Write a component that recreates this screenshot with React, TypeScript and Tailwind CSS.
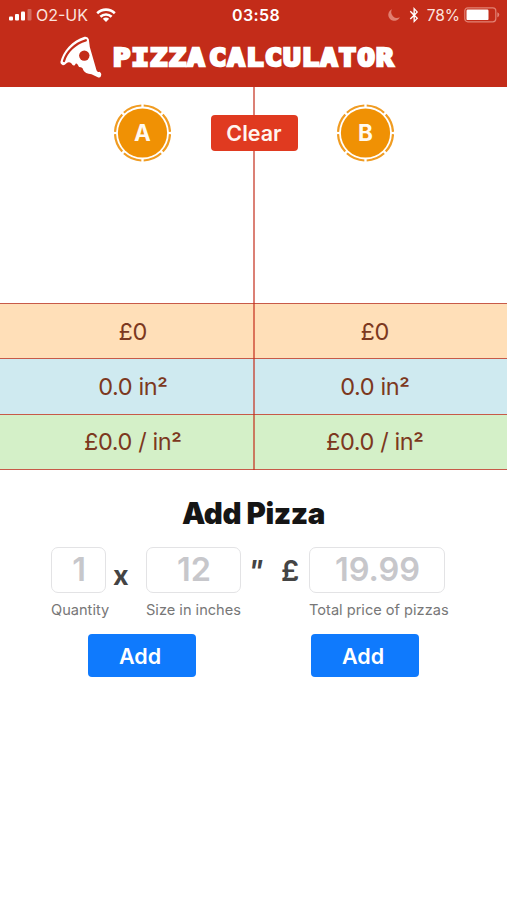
import { FaBluetoothB } from 'react-icons/fa'

const ROWS = [
  { value: '£0', squared: false, bg: 'bg-[#ffdfb8]' },
  { value: '0.0 in', squared: true, bg: 'bg-[#cfeaf0]' },
  { value: '£0.0 / in', squared: true, bg: 'bg-[#d4f0c8]' },
]

function StatusBar() {
  return (
    <div className="flex h-[30px] items-center text-[15.5px] text-[#fbe3de]">
      <div className="flex flex-1 items-center pl-[9px]">
        <svg width="23" height="12" viewBox="0 0 23 12" fill="#fff">
          <rect x="0" y="7.5" width="4" height="4" rx="1" />
          <rect x="6" y="5" width="4" height="6.5" rx="1" />
          <rect x="12" y="2.5" width="4" height="9" rx="1" />
          <rect x="18.5" y="0" width="4" height="11.5" rx="1" opacity=".3" />
        </svg>
        <span className="ml-[4px] text-[16px]">O2-UK</span>
        <svg className="ml-[8px]" width="20" height="15" viewBox="0 0 20 15" fill="none" stroke="#fff" strokeWidth="2.6">
          <path d="M1.2 5.2C6.2.4 13.8.4 18.8 5.2" />
          <path d="M4.4 8.7C7.6 5.7 12.4 5.7 15.6 8.7" />
          <path d="M10 14 6.8 10.8Q10 8.2 13.2 10.8Z" fill="#fff" stroke="none" />
        </svg>
      </div>
      <span className="pl-[3px] text-[16px] font-semibold tracking-[0.4px] text-white">03:58</span>
      <div className="flex flex-1 items-center justify-end pr-[7px]">
        <svg width="12" height="12" viewBox="0 0 12 12" fill="#e17f70">
          <path d="M4 .3A6 6 0 1 0 11.8 8.2 5.8 5.8 0 0 1 4 .3Z" />
        </svg>
        <FaBluetoothB className="ml-[6px] text-white" size={16} />
        <span className="mt-px ml-[5px]">78%</span>
        <svg className="ml-[4px]" width="36" height="16" viewBox="0 0 36 16">
          <rect x=".8" y=".8" width="31" height="14" rx="3" fill="none" stroke="#e28274" strokeWidth="1.2" />
          <rect x="2.5" y="2.5" width="22" height="10.6" rx="1.2" fill="#fff" />
          <path d="M33.3 5.2q2 .8 2 2.6t-2 2.6Z" fill="#e28274" />
        </svg>
      </div>
    </div>
  )
}

function PizzaSlice() {
  return (
    <svg width="42" height="43" viewBox="0 0 42 43" fill="none">
      <path
        d="M.4 26C3 15.5 12 4.500 24.500.8Q28 .2 28.800 3.300L29.800 11 36.500 34.300Q37.500 36.800 39.300 35.800Q42 37 41 40Q40 42.500 37.300 41L31.500 38.300Q25 37.500 23.500 34.500Q22.800 31.500 21 31.300Q18.500 31.500 17.600 28.500Q16 26.500 15 29Q13 30.700 11.500 27.500Q9 25.300 6.500 27.300Q4 29.800 2.500 29Q.2 28 .4 26Z"
        fill="#fff"
      />
      <path d="M4 25C6.500 16 15 7.500 25.800 4.300" stroke="#c32c19" strokeWidth="2.3" strokeLinecap="round" />
      <circle cx="24.3" cy="19.6" r="5.2" fill="#c32c19" />
    </svg>
  )
}

function Badge({ label }: { label: string }) {
  return (
    <svg width="58" height="58" viewBox="0 0 58 58">
      <circle cx="29.5" cy="29" r="24.6" fill="#f09104" />
      <circle
        cx="29.5"
        cy="29"
        r="27.5"
        fill="none"
        stroke="#f09c22"
        strokeWidth="2.2"
        pathLength="80"
        strokeDasharray="8.9 1.1"
        strokeDashoffset="-0.55"
      />
      <text x="29.5" y="36.8" textAnchor="middle" fill="#fffaf0" fontSize="22.5" fontWeight="700">
        {label}
      </text>
    </svg>
  )
}

function AddButton() {
  return (
    <button className="h-[43px] w-[108px] rounded-[4px] bg-[#0f7afd] pr-[4px] text-[21.5px] font-semibold text-white">
      Add
    </button>
  )
}

function Amount({ value, squared }: { value: string; squared: boolean }) {
  return (
    <>
      {value}
      {squared && <span className="inline-block align-[-2px] leading-none font-medium">²</span>}
    </>
  )
}

function Field({ placeholder, label, width }: { placeholder: string; label: string; width: string }) {
  return (
    <label className={`block ${width}`}>
      <input
        className="block h-[46px] w-full rounded-[7px] border border-[#e3e3e5] pl-px text-center text-[32.5px] font-semibold placeholder:text-[#c7c7cb]"
        placeholder={placeholder}
      />
      <span className="mt-[7px] block text-[14.6px] leading-5 whitespace-nowrap text-[#777]">{label}</span>
    </label>
  )
}

export default function App() {
  return (
    <div className="h-[900px] w-[507px] overflow-hidden bg-white font-['Inter',sans-serif]">
      <header className="h-[87px] bg-[#c32c19]">
        <StatusBar />
        <div className="flex pt-[6px] pl-[60px]">
          <PizzaSlice />
          <h1 className="mt-[5px] ml-[11px] origin-left scale-x-[1.17] font-['DejaVu_Sans_Mono',monospace] text-[24.5px] leading-[34px] font-bold tracking-[1.1px] whitespace-nowrap text-white [-webkit-text-stroke:2.6px_white] [word-spacing:-13px]">
            PIZZA CALCULATOR
          </h1>
        </div>
      </header>

      <section className="relative">
        <div className="flex h-[216px] justify-between px-[113px] pt-[17px]">
          <Badge label="A" />
          <Badge label="B" />
        </div>
        {ROWS.map(({ value, squared, bg }) => (
          <div
            key={value}
            className={`grid h-[55.4px] grid-cols-2 items-center border-t-[1.5px] border-[#c75a49] text-center text-[23.5px] tracking-[-0.4px] text-[#7c3820] ${bg}`}
          >
            <span className="pl-[12px]">
              <Amount value={value} squared={squared} />
            </span>
            <span className="pr-[11px]">
              <Amount value={value} squared={squared} />
            </span>
          </div>
        ))}
        <div className="h-px bg-[#c75a49]" />
        <div className="absolute top-0 left-[253px] h-full w-[2px] bg-[#c32c19]/60" />
        <button className="absolute top-[28px] left-[210.5px] h-[36px] w-[87px] rounded-[4px] bg-[#e03a20] text-[21.5px] font-semibold text-[#fff5f0]">
          Clear
        </button>
      </section>

      <section>
        <h2 className="mt-[24px] text-center text-[29.5px] leading-[39px] font-black tracking-[-0.4px] text-[#151515]">
          Add Pizza
        </h2>
        <div className="mt-[14px] flex pl-[51px] text-[#444]">
          <Field placeholder="1" label="Quantity" width="w-[55px]" />
          <span className="mt-[11px] w-[40px] pl-[7px] text-[27px] leading-[36px] font-bold">x</span>
          <Field placeholder="12" label="Size in inches" width="w-[95px]" />
          <span className="mt-[6px] ml-[7px] w-[33px] text-[29px] leading-[36px] font-semibold italic">"</span>
          <span className="mt-[6px] w-[28px] text-[29px] leading-[36px] font-semibold">£</span>
          <Field placeholder="19.99" label="Total price of pizzas" width="w-[136px]" />
        </div>
        <div className="mt-[14px] flex gap-[115px] pl-[88px]">
          <AddButton />
          <AddButton />
        </div>
      </section>
    </div>
  )
}
